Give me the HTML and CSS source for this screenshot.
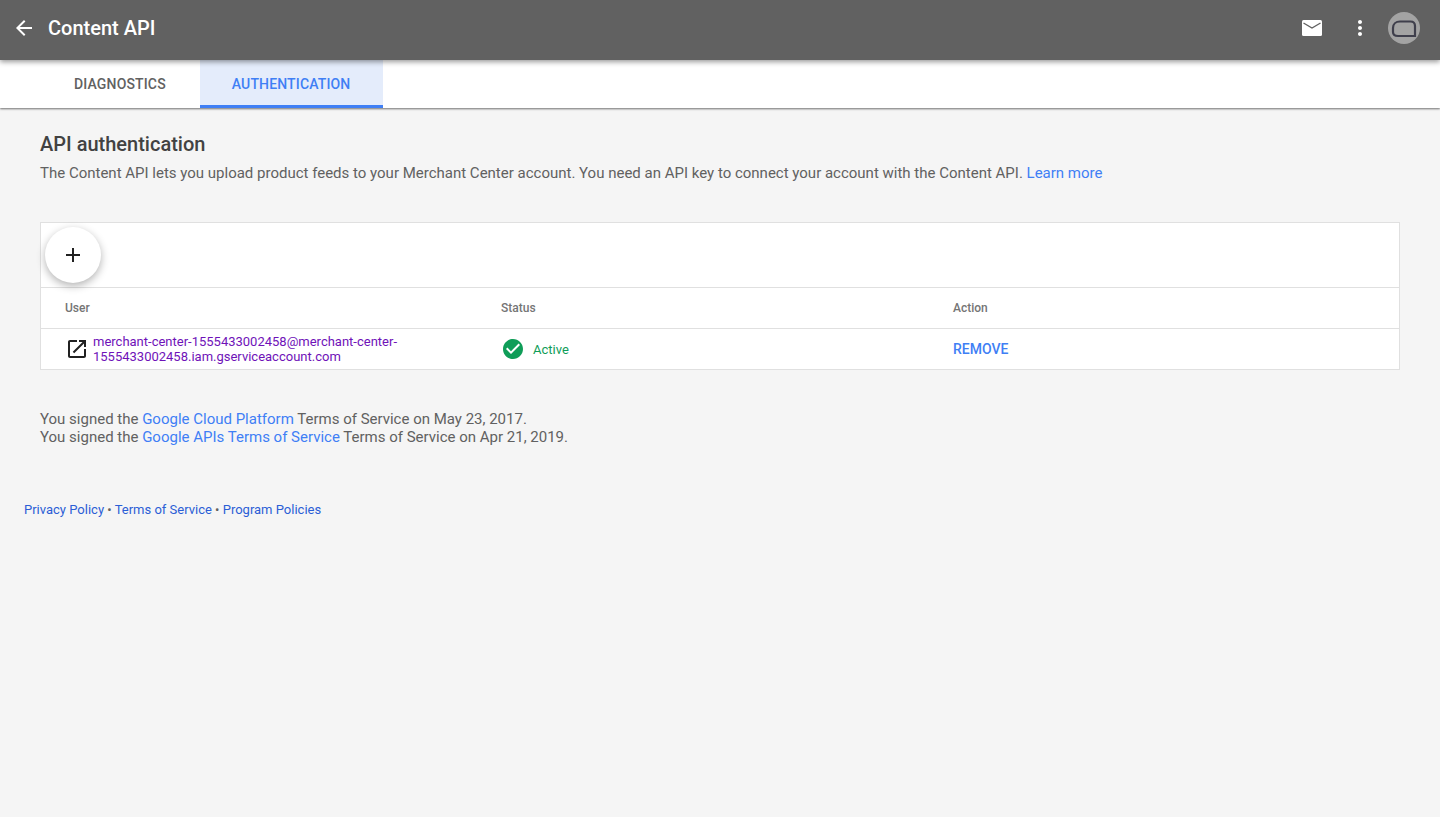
FILE: index.html
```html
<!DOCTYPE html>
<html lang="en">
<head>
    <meta charset="UTF-8">
    <title>Content API</title>
    <link rel="stylesheet" href="styles.css">
</head>
<body>
    <header class="topbar">
        <svg class="back" width="24" height="24" viewBox="0 0 24 24"><path fill="#fff" d="M20 11H7.83l5.59-5.59L12 4l-8 8 8 8 1.41-1.41L7.83 13H20v-2z"/></svg>
        <h1>Content API</h1>
        <div class="top-icons">
            <svg class="mail" width="24" height="24" viewBox="0 0 24 24"><rect x="2" y="4" width="20" height="16" rx="1.5" fill="#fff"/><path fill="none" stroke="#616161" stroke-width="1.4" d="M3.5 7l8.5 5 8.5-5"/></svg>
            <svg class="more" width="24" height="24" viewBox="0 0 24 24"><path fill="#fff" d="M12 8c1.100 0 2-.9 2-2s-.9-2-2-2-2 .9-2 2 .9 2 2 2zm0 2c-1.100 0-2 .9-2 2s.9 2 2 2 2-.9 2-2-.9-2-2-2zm0 6c-1.100 0-2 .9-2 2s.9 2 2 2 2-.9 2-2-.9-2-2-2z"/></svg>
            <svg class="avatar" width="32" height="32" viewBox="0 0 32 32"><circle cx="16" cy="16" r="16" fill="#a3a3a3"/><path fill="none" stroke="#3f3f4c" stroke-width="2.2" d="M27 24H10C7 24 5 22.500 5 20V16C5 12 8 9.500 12 9.500H22.500C25.500 9.500 27 11.500 27 14Z"/></svg>
        </div>
    </header>

    <nav class="tabs">
        <a class="tab">DIAGNOSTICS</a>
        <a class="tab active">AUTHENTICATION</a>
    </nav>

    <main class="content">
        <h2>API authentication</h2>
        <p class="intro">The Content API lets you upload product feeds to your Merchant Center account. You need an API key to connect your account with the Content API. <a class="link">Learn more</a></p>

        <section class="card">
            <div class="toolbar">
                <button class="fab">
                    <svg width="24" height="24" viewBox="0 0 24 24"><path fill="#212121" d="M19 13h-6v6h-2v-6H5v-2h6V5h2v6h6v2z"/></svg>
                </button>
            </div>
            <div class="row head">
                <div class="col-user">User</div>
                <div class="col-status">Status</div>
                <div class="col-action">Action</div>
            </div>
            <div class="row body">
                <div class="col-user user-cell">
                    <svg width="24" height="24" viewBox="0 0 24 24"><path fill="#212121" d="M19 19H5V5h7V3H5c-1.110 0-2 .9-2 2v14c0 1.100.89 2 2 2h14c1.100 0 2-.9 2-2v-7h-2v7zM14 3v2h3.590l-9.830 9.830 1.410 1.410L19 6.410V10h2V3h-7z"/></svg>
                    <a class="account">merchant-center-1555433002458@merchant-center-<br>1555433002458.iam.gserviceaccount.com</a>
                </div>
                <div class="col-status status-cell">
                    <svg width="24" height="24" viewBox="0 0 24 24"><path fill="#0f9d58" d="M12 2C6.480 2 2 6.480 2 12s4.480 10 10 10 10-4.480 10-10S17.520 2 12 2zm-2 15l-5-5 1.410-1.410L10 14.170l7.590-7.590L19 8l-9 9z"/></svg>
                    <span>Active</span>
                </div>
                <div class="col-action"><a class="remove">REMOVE</a></div>
            </div>
        </section>

        <p class="terms">You signed the <a class="link">Google Cloud Platform</a> Terms of Service on May 23, 2017.<br>
        You signed the <a class="link">Google APIs Terms of Service</a> Terms of Service on Apr 21, 2019.</p>
    </main>

    <footer class="footer">
        <a>Privacy Policy</a> • <a>Terms of Service</a> • <a>Program Policies</a>
    </footer>
</body>
</html>
```

FILE: styles.css
```css
html, body {
    height: 100%;
}
body {
    margin: 0;
    overflow: hidden;
    background: #f5f5f5;
    color: #616161;
    font-family: Roboto, Arial, sans-serif;
    font-size: 14px;
}
.topbar {
    position: relative;
    z-index: 2;
    display: flex;
    align-items: center;
    height: 60px;
    padding-bottom: 4px;
    box-sizing: border-box;
    background: #616161;
    box-shadow: 0 2px 5px rgba(0, 0, 0, 0.4);
}
.back {
    margin-left: 12px;
}
.topbar h1 {
    margin: 0 0 0 12px;
    color: #ffffff;
    font-size: 20px;
    font-weight: 500;
}
.top-icons {
    display: flex;
    align-items: center;
    margin-left: auto;
    margin-right: 20px;
}
.more {
    margin-left: 24px;
}
.avatar {
    margin-left: 16px;
}
.tabs {
    position: relative;
    z-index: 1;
    display: flex;
    height: 48px;
    padding-left: 40px;
    background: #ffffff;
    box-shadow: 0 1px 2px rgba(0, 0, 0, 0.55);
}
.tab {
    display: flex;
    align-items: center;
    padding: 0 34px;
    color: #616161;
    font-size: 14px;
    font-weight: 500;
    letter-spacing: 0.15px;
}
.tab.active {
    padding: 3px 33px 0 32px;
    color: #3f7ff5;
    background: #e4ecfb;
    border-bottom: 3px solid #3f7ff5;
    box-sizing: border-box;
}
.content {
    padding: 24px 40px 0;
}
h2 {
    margin: 0;
    color: #424242;
    font-size: 20px;
    font-weight: 500;
    line-height: 24px;
}
.intro {
    margin: 7px 0 0;
    line-height: 20px;
    font-size: 15px;
}
.link {
    color: #3f7ff5;
}
.card {
    margin-top: 39px;
    background: #ffffff;
    border: 1px solid #e0e0e0;
}
.toolbar {
    height: 64px;
    padding-left: 4px;
    display: flex;
    align-items: center;
}
.fab {
    display: flex;
    align-items: center;
    justify-content: center;
    width: 56px;
    height: 56px;
    padding: 0;
    border: none;
    border-radius: 50%;
    background: #ffffff;
    box-shadow: 0 3px 8px rgba(0, 0, 0, 0.3);
}
.row {
    display: flex;
    align-items: center;
    border-top: 1px solid #e0e0e0;
    height: 40px;
}
.col-user {
    width: 460px;
    padding-left: 24px;
    box-sizing: border-box;
}
.col-status {
    width: 452px;
}
.head {
    font-size: 12px;
    font-weight: 500;
    color: #757575;
}
.user-cell, .status-cell {
    display: flex;
    align-items: center;
}
.user-cell svg {
    flex: none;
    margin-right: 4px;
}
.account {
    color: #6f12b8;
    font-size: 13px;
    line-height: 15px;
}
.status-cell span {
    margin-left: 8px;
    color: #0f9d58;
    font-size: 13px;
}
.remove {
    color: #3f7ff5;
    font-weight: 500;
    font-size: 14px;
}
.terms {
    margin: 40px 0 0;
    line-height: 18px;
    font-size: 15px;
}
.footer {
    margin-top: 55px;
    padding-left: 24px;
    font-size: 13px;
    line-height: 18px;
}
.footer a {
    color: #2b5ed6;
}
```
